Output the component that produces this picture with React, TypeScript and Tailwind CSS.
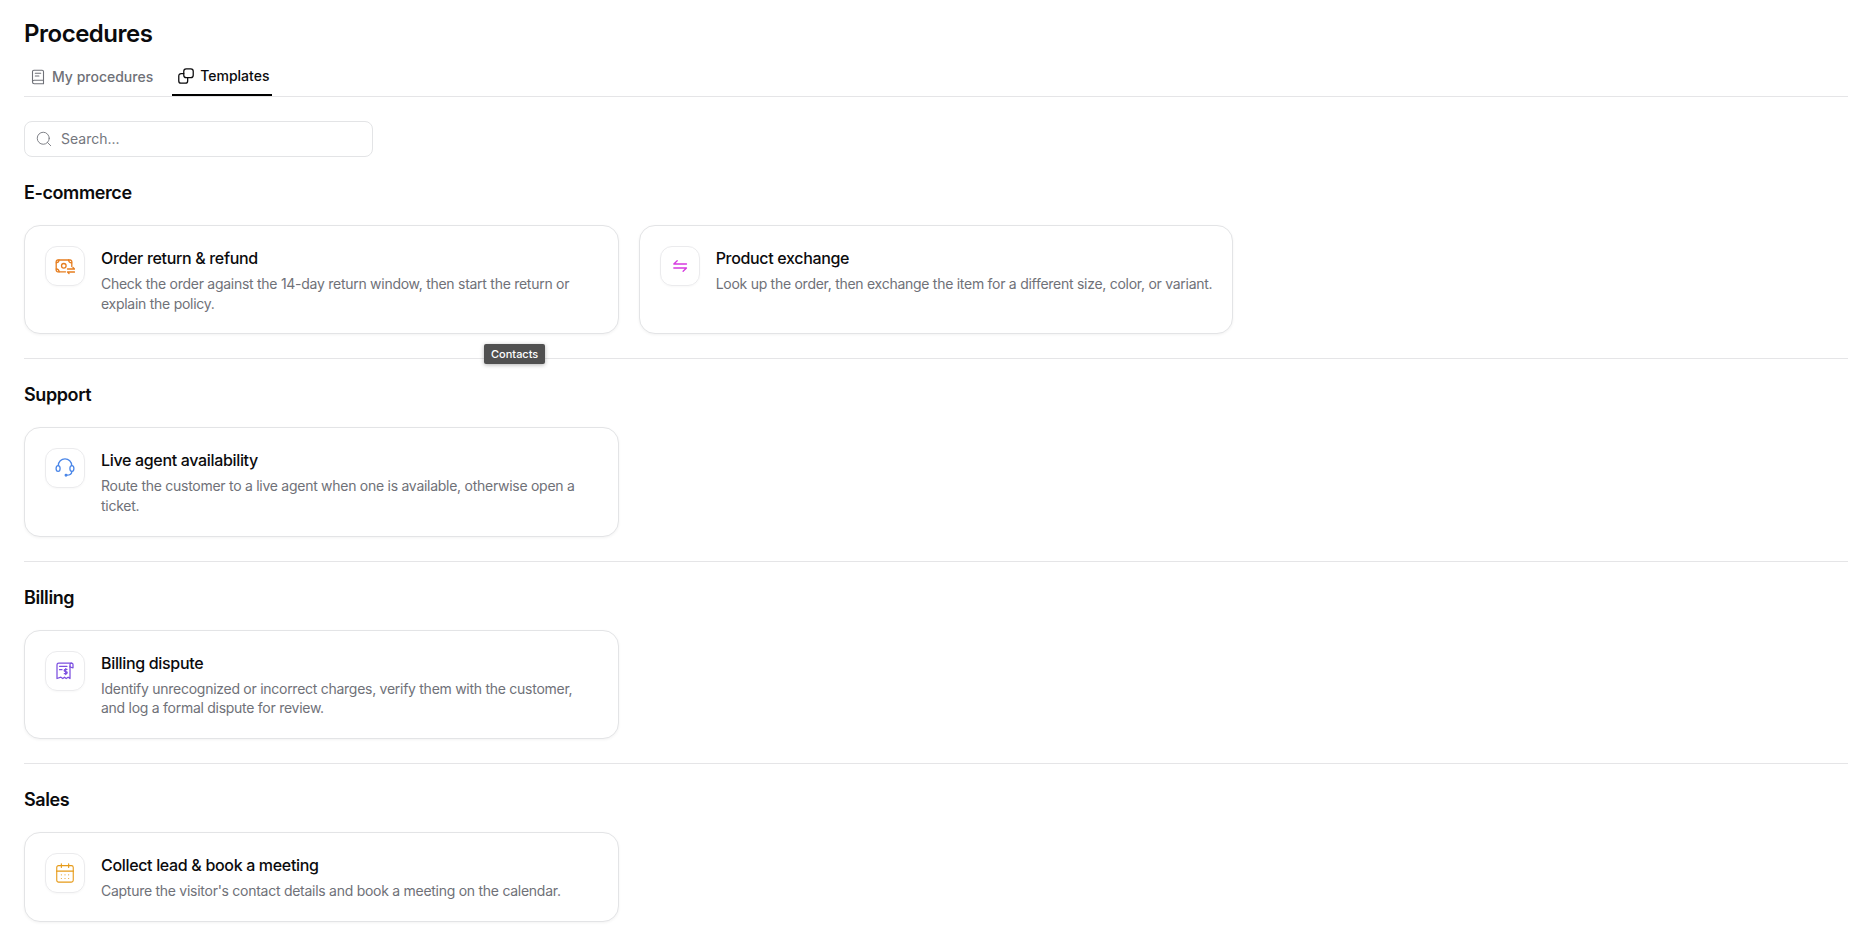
import { CalendarDays, Search } from "lucide-react";
import type { ReactNode } from "react";

function BookIcon() {
  return (
    <svg width="16" height="16" viewBox="0 0 16 16" fill="none" stroke="currentColor" strokeWidth="1.1" strokeLinecap="round" strokeLinejoin="round">
      <path d="M2.500 13V2.600a1.400 1.400 0 0 1 1.400-1.400h8.200a1.400 1.400 0 0 1 1.400 1.400v8.600H4.200a1.700 1.700 0 0 0-1.700 1.800 1.700 1.700 0 0 0 1.700 1.700h9.300v-3.500" />
      <path d="M5.300 4.300h5.400M5.300 7h3.600" />
    </svg>
  );
}

function TemplatesIcon() {
  return (
    <svg width="16" height="16" viewBox="0.8 0.8 14.4 14.4" fill="none" stroke="currentColor" strokeWidth="1.15" strokeLinecap="round" strokeLinejoin="round">
      <rect x="6" y="1.500" width="8.500" height="8" rx="2.200" />
      <path d="M6 5.800H3.600a2.100 2.100 0 0 0-2.100 2.100v4.500a2.100 2.100 0 0 0 2.100 2.100h3.800a2.100 2.100 0 0 0 2.100-2.100V9.500" />
    </svg>
  );
}

function RefundIcon() {
  return (
    <svg width="20" height="20" viewBox="0 0 20 20" fill="none" stroke="currentColor" strokeWidth="1.3" strokeLinecap="round" strokeLinejoin="round">
      <path d="M10.500 15.800H2.800a1.600 1.600 0 0 1-1.600-1.600V5.600A1.600 1.600 0 0 1 2.800 4h12.400a1.600 1.600 0 0 1 1.600 1.600v4.900" />
      <circle cx="8.800" cy="9.800" r="2.300" />
      <path d="M1.300 6.800A3 3 0 0 0 4 4M13.600 4a3 3 0 0 0 3.100 2.800M1.300 13a3 3 0 0 1 2.800 2.800" />
      <path d="M12.500 13h7l-1.500-1.500M19.500 16h-7l1.500 1.500" />
    </svg>
  );
}

function ExchangeIcon() {
  return (
    <svg width="16" height="16" viewBox="0 0 16 16" fill="none" stroke="currentColor" strokeWidth="1.3" strokeLinecap="round" strokeLinejoin="round">
      <path d="M14.500 6H1.800l3.400-3.300" />
      <path d="M1.800 10h12.700l-3.400 3.300" />
    </svg>
  );
}

function HeadsetIcon() {
  return (
    <svg width="20" height="20" viewBox="0 0 20 20" fill="none" stroke="currentColor" strokeWidth="1.3" strokeLinecap="round" strokeLinejoin="round">
      <path d="M3.300 7.700V7.500a6.700 6.700 0 0 1 13.400 0v.2" />
      <ellipse cx="3.100" cy="10.500" rx="2" ry="2.900" />
      <ellipse cx="16.900" cy="10.500" rx="2" ry="2.900" />
      <path d="M16.800 13.400c0 2.100-2 3.700-5 3.800" />
      <circle cx="11" cy="17.200" r="0.800" />
    </svg>
  );
}

function ReceiptIcon() {
  return (
    <svg width="20" height="20" viewBox="0 0 20 20" fill="none" stroke="currentColor" strokeWidth="1.25" strokeLinecap="round" strokeLinejoin="round">
      <path d="M15 5v12.500l-1.900-1.300-1.900 1.300-1.700-1.300-1.700 1.300-1.900-1.300-3.900 1.300V3.800A1.800 1.800 0 0 1 3.800 2h12.700" />
      <path d="M15 6V3.500A1.500 1.500 0 0 1 16.500 2 1.500 1.500 0 0 1 18 3.500V6.800l-3-.8" />
      <path d="M4.500 5.300h7.500M4.500 8.700h2.500" />
      <path d="M12 8.300h-1.700a1 1 0 0 0 0 2.200h.8a1 1 0 0 1 0 2.200H9.300M10.700 7.500v6" />
    </svg>
  );
}

function CardItem({ icon, color, title, desc }: { icon: ReactNode; color: string; title: string; desc: string }) {
  return (
    <div className="flex gap-4 rounded-2xl border border-[#e3e4e6] bg-white pt-5 pr-[18px] pb-[20.3px] pl-5 shadow-[0_1px_3px_rgba(0,0,0,0.05)]">
      <div className={`flex h-10 w-10 shrink-0 items-center justify-center rounded-xl border border-[#ebebed] shadow-[0_1px_2px_rgba(0,0,0,0.03)] ${color}`}>
        {icon}
      </div>
      <div className="min-w-0">
        <div className="text-base leading-6 font-[550] tracking-[-0.33px] text-[#0b0b0d]">{title}</div>
        <p className="mt-1 text-sm leading-[19.5px] tracking-[-0.27px] text-[#6f7178]">{desc}</p>
      </div>
    </div>
  );
}

function Section({ title, last, children }: { title: string; last?: boolean; children: ReactNode }) {
  return (
    <section className={last ? "pt-6" : "border-b border-[#e5e5e7] pt-6 pb-6"}>
      <h2 className="mb-5 text-lg leading-6 font-semibold tracking-[-0.4px] text-[#0b0b0d]">{title}</h2>
      <div className="grid grid-cols-3 gap-5">{children}</div>
    </section>
  );
}

export default function App() {
  return (
    <div className="relative min-h-[947px] bg-white px-6 pt-[18px] font-['Inter',sans-serif]">
      <h1 className="text-2xl leading-8 font-semibold tracking-[-0.48px] text-[#0b0b0d]">Procedures</h1>

      <div className="mt-1.5 flex gap-4 border-b border-[#e5e5e7]">
        <div className="flex h-10 items-center gap-1.5 pt-0.5 pr-[3px] pl-1.5 text-sm font-medium text-[#6f7178]">
          <BookIcon />
          My procedures
        </div>
        <div className="-mb-px flex h-10 items-center gap-1.5 border-b-2 border-black pt-px pr-[3px] pl-1.5 text-sm font-medium text-[#0b0b0d]">
          <TemplatesIcon />
          Templates
        </div>
      </div>

      <div className="mt-6 flex h-9 w-[349px] items-center gap-2 rounded-lg border border-[#e3e4e6] pl-2.5 text-sm text-[#74767d]">
        <Search size={18} strokeWidth={1.2} />
        Search...
      </div>

      <Section title="E-commerce">
        <CardItem
          icon={<RefundIcon />}
          color="text-[#e67e1f]"
          title="Order return & refund"
          desc="Check the order against the 14-day return window, then start the return or explain the policy."
        />
        <CardItem
          icon={<ExchangeIcon />}
          color="text-[#d63ae0]"
          title="Product exchange"
          desc="Look up the order, then exchange the item for a different size, color, or variant."
        />
      </Section>
      <Section title="Support">
        <CardItem
          icon={<HeadsetIcon />}
          color="text-[#4a86e8]"
          title="Live agent availability"
          desc="Route the customer to a live agent when one is available, otherwise open a ticket."
        />
      </Section>
      <Section title="Billing">
        <CardItem
          icon={<ReceiptIcon />}
          color="text-[#7c4fe0]"
          title="Billing dispute"
          desc="Identify unrecognized or incorrect charges, verify them with the customer, and log a formal dispute for review."
        />
      </Section>
      <Section title="Sales" last>
        <CardItem
          icon={<CalendarDays size={22} strokeWidth={1.2} />}
          color="text-[#e69a17]"
          title="Collect lead & book a meeting"
          desc="Capture the visitor's contact details and book a meeting on the calendar."
        />
      </Section>

      <div className="absolute top-[344px] left-[484px] rounded-[2px] bg-[#505050] px-[7px] py-[3px] text-[11px] leading-[14px] font-medium text-white shadow-[0_1px_4px_rgba(0,0,0,0.3)]">
        Contacts
      </div>
    </div>
  );
}
